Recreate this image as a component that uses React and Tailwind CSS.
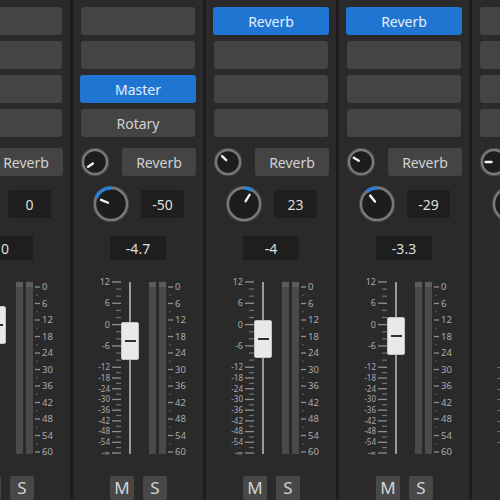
import React from "react";

const strips = [
  { slots: [null, null, null, null], send: -90, pan: 0, vol: "0", db: 0, offLeft: true },
  {
    slots: [null, null, { label: "Master", active: true }, { label: "Rotary" }],
    send: -125,
    pan: -50,
    vol: "-4.7",
    db: -4.7,
  },
  { slots: [{ label: "Reverb", active: true }, null, null, null], send: -45, pan: 23, vol: "-4", db: -4 },
  { slots: [{ label: "Reverb", active: true }, null, null, null], send: -60, pan: -29, vol: "-3.3", db: -3.3 },
  { slots: [null, null, null, null], send: -90, pan: 0, vol: "0", db: 0 },
];

// y position (inside the fader section) of a dB value on the fader scale
function faderY(db) {
  if (db === -Infinity) return 181;
  if (db >= -12) return 52.6 - db * 3.555;
  return 95.3 + (-12 - db) * 1.786;
}

function polar(c, r, deg) {
  const a = (deg * Math.PI) / 180;
  return [c + r * Math.sin(a), c - r * Math.cos(a)];
}

function Knob({ size, angle, arc }) {
  const c = size / 2;
  const r = c - 2;
  const [x1, y1] = polar(c, size * 0.09, angle);
  const [x2, y2] = polar(c, size * 0.3, angle);
  const [ax, ay] = polar(c, r, angle);
  return (
    <svg width={size} height={size} viewBox={`0 0 ${size} ${size}`} className="shrink-0">
      <circle cx={c} cy={c} r={r + 0.6} fill="none" stroke="#444444" strokeWidth="3.6" />
      <circle cx={c} cy={c} r={r} fill="#1d1d1d" stroke="#7a7a7a" strokeWidth="2.4" />
      {arc && angle !== 0 && (
        <path
          d={`M ${c} ${c - r} A ${r} ${r} 0 0 ${angle > 0 ? 1 : 0} ${ax} ${ay}`}
          fill="none"
          stroke="#2b7fd9"
          strokeWidth="3.6"
        />
      )}
      <line x1={x1} y1={y1} x2={x2} y2={y2} stroke="#f2f2f2" strokeWidth="2.4" strokeLinecap="round" />
    </svg>
  );
}

function Slot({ slot }) {
  if (slot?.active) {
    return (
      <div className="h-[28px] rounded-[3px] bg-[#1f75d1] flex items-center justify-center text-[14px] text-[#e6eef9]">
        {slot.label}
      </div>
    );
  }
  return (
    <div className="h-[28px] mx-[1px] rounded-[3px] bg-[#444444] flex items-center justify-center text-[14px] text-[#d2d2d2]">
      {slot?.label}
    </div>
  );
}

const leftMajor = [12, 6, 0, -6, -12, -18, -24, -30, -36, -42, -48, -54];
const leftMinor = [10, 8, 4, 2, -2, -4, -8, -10, -15, -21, -27, -33, -39, -45, -51, -57];
const rightLabels = [0, 6, 12, 18, 24, 30, 36, 42, 48, 54, 60];

function LeftScale({ hideText }) {
  return (
    <svg width="48" height="192" className="shrink-0">
      {leftMajor.map((db) => (
        <g key={db}>
          <line x1="39" x2="48" y1={faderY(db)} y2={faderY(db)} stroke="#909090" strokeWidth="1.3" />
          {!hideText && (
            <text
              x="37"
              y={faderY(db)}
              dy="0.35em"
              textAnchor="end"
              fontSize={db > -12 ? 9 : 8}
              fill="#ababab"
            >
              {db}
            </text>
          )}
        </g>
      ))}
      <line x1="39" x2="48" y1={faderY(-Infinity)} y2={faderY(-Infinity)} stroke="#909090" strokeWidth="1.3" />
      {!hideText && (
        <text x="37" y={faderY(-Infinity)} dy="0.35em" textAnchor="end" fontSize="8" fill="#ababab">
          -∞
        </text>
      )}
      {leftMinor.map((db) => {
        const y = db === -57 ? 175.6 : faderY(db);
        return <line key={db} x1="43" x2="48" y1={y} y2={y} stroke="#727272" strokeWidth="1.2" />;
      })}
    </svg>
  );
}

function RightScale() {
  return (
    <svg width="37" height="192" className="shrink-0">
      {rightLabels.map((v, i) => {
        const y = 15 + i * 16.5;
        return (
          <g key={v}>
            <line x1="2" x2="7" y1={y} y2={y} stroke="#909090" strokeWidth="1.3" />
            <text x="9" y={y} dy="0.35em" fontSize="9.5" fill="#ababab">
              {v}
            </text>
            {i < 10 && <line x1="3" x2="5" y1={y + 8.25} y2={y + 8.25} stroke="#606060" strokeWidth="1.2" />}
          </g>
        );
      })}
    </svg>
  );
}

function MeterBar() {
  return (
    <div className="w-[7px] h-[172px] mt-[10px] bg-[#4a4a4a] flex flex-col">
      <div className="h-[5px] bg-[#5e5e5e]" />
    </div>
  );
}

function Strip({ strip }) {
  return (
    <div className="w-[133px] shrink-0 h-full border-r-[3px] border-[#1c1c1c] flex flex-col pt-[7px]">
      <div className="flex flex-col gap-[6px] px-[7px]">
        {strip.slots.map((s, i) => (
          <Slot key={i} slot={s} />
        ))}
      </div>

      {/* send */}
      <div className="flex items-center mt-[11px] pl-[8px] h-[28px]">
        <Knob size={28} angle={strip.send} />
        <div className="ml-[13px] w-[74px] h-[28px] rounded-[3px] bg-[#444444] flex items-center justify-center text-[14px] text-[#d2d2d2]">
          Reverb
        </div>
      </div>

      {/* pan */}
      <div className="flex items-center mt-[11px] pl-[20px] h-[34px]">
        <Knob size={36} angle={(strip.pan / 100) * 135} arc />
        <div className="ml-[12px] w-[43px] h-[28px] rounded-[2px] bg-[#1e1e1e] flex items-center justify-center text-[14px] text-[#dedede]">
          {strip.pan}
        </div>
      </div>

      {/* volume value */}
      <div className="mt-[15px] mx-auto w-[56px] h-[27px] rounded-[2px] bg-[#1e1e1e] flex items-center justify-center text-[14px] text-[#dedede]">
        {strip.vol}
      </div>

      {/* fader + meters */}
      <div className="flex mt-[12px] h-[192px]">
        <LeftScale hideText={strip.offLeft} />
        <div className="relative w-[18px] shrink-0">
          <div className="absolute left-[8px] top-[10px] w-[2px] h-[172px] bg-[#9a9a9a]" />
          <div
            className="absolute left-0 w-[18px] h-[38px] rounded-[2px] bg-[#e9e9e9] border border-[#c4c4c4] flex items-center justify-center"
            style={{ top: faderY(strip.db) - 19 }}
          >
            <div className="w-[11px] h-[2px] bg-[#2e2e2e]" />
          </div>
        </div>
        <div className="ml-[10px] flex gap-[3px]">
          <MeterBar />
          <MeterBar />
        </div>
        <RightScale />
      </div>

      {/* mute / solo */}
      <div className="flex mt-[12px] pl-[37px] gap-[9px]">
        <div className="w-[24px] h-[24px] rounded-[2px] bg-[#484848] flex items-center justify-center text-[17px] text-[#d4d4d4]">
          M
        </div>
        <div className="w-[24px] h-[24px] rounded-[2px] bg-[#484848] flex items-center justify-center text-[17px] text-[#d4d4d4]">
          S
        </div>
      </div>
    </div>
  );
}

export default function App() {
  return (
    <div
      className="w-[500px] h-[500px] overflow-hidden bg-[#2a2a2a]"
      style={{ fontFamily: '"Noto Sans", "Open Sans", sans-serif' }}
    >
      <div className="flex h-full ml-[-60px]">
        {strips.map((s, i) => (
          <Strip key={i} strip={s} />
        ))}
      </div>
    </div>
  );
}
